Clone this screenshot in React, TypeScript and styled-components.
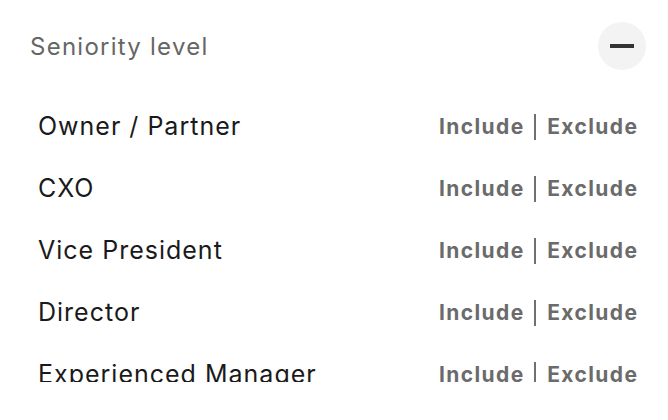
import React, { useState } from "react";
import styled, { createGlobalStyle } from "styled-components";

type Choice = "include" | "exclude" | null;

const LEVELS = [
  "Owner / Partner",
  "CXO",
  "Vice President",
  "Director",
  "Experienced Manager",
  "Entry Level Manager",
  "Strategic",
  "Senior",
];

const GlobalStyle = createGlobalStyle`
  html, body {
    margin: 0;
    padding: 0;
    background: #fff;
    font-family: Inter, "Noto Sans", "Liberation Sans", sans-serif;
    -webkit-font-smoothing: antialiased;
  }
`;

const Panel = styled.section`
  width: 668px;
  height: 420px;
  background: #fff;
  box-sizing: border-box;
`;

const Header = styled.div`
  display: flex;
  align-items: center;
  justify-content: space-between;
  padding: 22px 22px 0 30px;
  height: 48px;
`;

const Title = styled.h3`
  margin: 0;
  font-size: 24px;
  font-weight: 400;
  color: #666;
  letter-spacing: 1.25px;
`;

const Toggle = styled.button`
  width: 48px;
  height: 48px;
  border-radius: 50%;
  border: 0;
  padding: 0;
  background: #f3f3f3;
  display: flex;
  align-items: center;
  justify-content: center;
  cursor: pointer;
`;

const Minus = styled.span`
  width: 24px;
  height: 4px;
  background: #333;
`;

const List = styled.ul`
  list-style: none;
  margin: 25px 0 0;
  padding: 0 31px 0 38px;
  height: 287px;
  overflow: hidden;
`;

const Row = styled.li`
  display: flex;
  align-items: center;
  justify-content: space-between;
  height: 62px;
`;

const Label = styled.span`
  font-size: 25px;
  color: #1a1a1a;
  letter-spacing: 1px;
`;

const Actions = styled.div`
  display: flex;
  align-items: center;
  gap: 11px;
`;

const Action = styled.button<{ $active: boolean }>`
  border: 0;
  background: none;
  padding: 0;
  margin-right: -1.4px;
  font-family: inherit;
  font-size: 21px;
  font-weight: 700;
  letter-spacing: 1.4px;
  color: ${({ $active }) => ($active ? "#222" : "#6b6b6b")};
  cursor: pointer;
`;

const Divider = styled.span`
  width: 2px;
  height: 26px;
  background: #707070;
  margin-top: 2px;
`;

export default function App() {
  const [open, setOpen] = useState(true);
  const [picks, setPicks] = useState<Record<string, Choice>>({});

  const pick = (level: string, choice: Choice) =>
    setPicks((prev) => ({ ...prev, [level]: prev[level] === choice ? null : choice }));

  return (
    <>
      <GlobalStyle />
      <Panel>
        <Header>
          <Title>Seniority level</Title>
          <Toggle type="button" aria-label="Collapse" onClick={() => setOpen((o) => !o)}>
            <Minus />
          </Toggle>
        </Header>
        {open ? (
          <List>
            {LEVELS.map((level) => (
              <Row key={level}>
                <Label>{level}</Label>
                <Actions>
                  <Action $active={picks[level] === "include"} onClick={() => pick(level, "include")}>
                    Include
                  </Action>
                  <Divider />
                  <Action $active={picks[level] === "exclude"} onClick={() => pick(level, "exclude")}>
                    Exclude
                  </Action>
                </Actions>
              </Row>
            ))}
          </List>
        ) : null}
      </Panel>
    </>
  );
}
